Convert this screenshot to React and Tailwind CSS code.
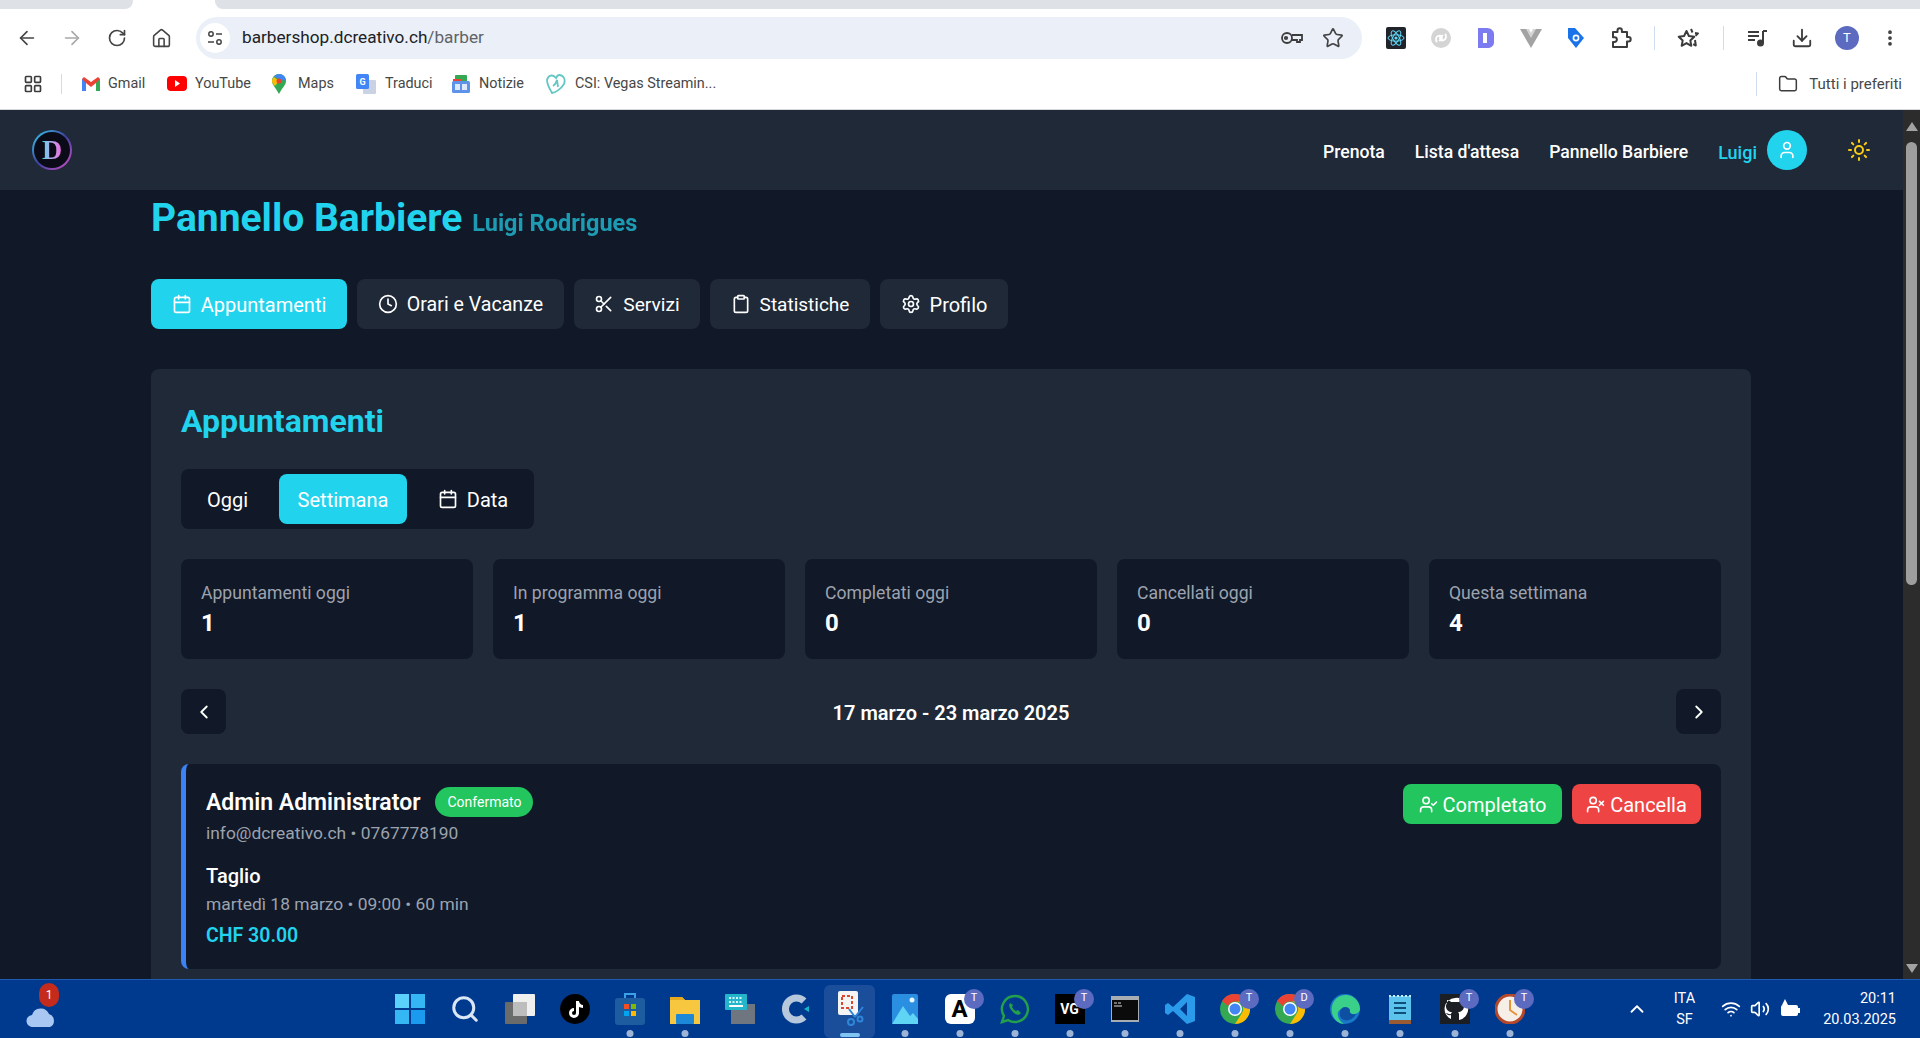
import { ArrowLeft, ArrowRight, RotateCw, Home, Star, Download, MoreVertical, Folder, User, Sun, Calendar, Clock, Scissors, Clipboard, Settings, UserCheck, UserX, ChevronLeft, ChevronRight, ChevronUp, Wifi, Volume2, LayoutGrid, Search } from 'lucide-react'

const FONT = 'font-["Roboto","Liberation_Sans",sans-serif]'

const tabs = [
  { label: 'Appuntamenti', icon: Calendar, active: true, size: 'w-[196px] text-[20px]' },
  { label: 'Orari e Vacanze', icon: Clock, size: 'w-[207px] text-[19.6px]' },
  { label: 'Servizi', icon: Scissors, size: 'w-[126px] text-[19.2px]' },
  { label: 'Statistiche', icon: Clipboard, size: 'w-[160px] text-[19px]' },
  { label: 'Profilo', icon: Settings, size: 'w-[128px] text-[20px]' },
]

const stats = [
  { label: 'Appuntamenti oggi', value: 1 },
  { label: 'In programma oggi', value: 1 },
  { label: 'Completati oggi', value: 0 },
  { label: 'Cancellati oggi', value: 0 },
  { label: 'Questa settimana', value: 4 },
]

function TuneIcon() {
  return (
    <svg width="18" height="18" viewBox="0 0 18 18" fill="none" stroke="#444" strokeWidth="1.5">
      <circle cx="5" cy="5" r="2.2" />
      <path d="M10 5h6M2 13h6" />
      <circle cx="13" cy="13" r="2.2" />
    </svg>
  )
}

function KeyIcon() {
  return (
    <svg width="24" height="22" viewBox="0 0 24 22" fill="none" stroke="#3c3c3c" strokeWidth="1.8">
      <circle cx="7" cy="11" r="5" />
      <circle cx="6" cy="11" r="1.2" />
      <path d="M12 8h10v5h-2v2h-3v-2h-5" />
    </svg>
  )
}

function PuzzleIcon() {
  return (
    <svg width="22" height="22" viewBox="0 0 22 22" fill="none" stroke="#3c3c3c" strokeWidth="2" strokeLinejoin="round">
      <path d="M3 5h4.5V3.5a2.2 2.2 0 014.4 0V5H17v5h1.5a2.2 2.2 0 010 4.4H17V20H3v-5h1.5a2.4 2.4 0 000-4.8H3z" />
    </svg>
  )
}

function StarsIcon() {
  return (
    <svg width="24" height="24" viewBox="0 0 24 24" fill="none" stroke="#3c3c3c" strokeWidth="2" strokeLinejoin="round">
      <path d="M9.5 5l2.4 5 5.4.7-4 3.7 1 5.4-4.8-2.7-4.8 2.7 1-5.4-4-3.7 5.4-.7z" />
      <path d="M14 3l1.5 3.5M18 7l3 .4-2.5 2.4M18 14l.8 5.5-2.6-1.4" />
    </svg>
  )
}

function ReactIcon() {
  return (
    <svg width="20" height="22" viewBox="0 0 20 22">
      <rect width="20" height="22" rx="2" fill="#20232a" />
      <g fill="none" stroke="#61dafb" strokeWidth="1">
        <ellipse cx="10" cy="11" rx="8" ry="3.2" />
        <ellipse cx="10" cy="11" rx="8" ry="3.2" transform="rotate(60 10 11)" />
        <ellipse cx="10" cy="11" rx="8" ry="3.2" transform="rotate(120 10 11)" />
      </g>
      <circle cx="10" cy="11" r="1.6" fill="#61dafb" />
    </svg>
  )
}

function ExtIcons() {
  return (
    <div className="flex items-center">
      <div className="w-[45px] flex justify-center"><ReactIcon /></div>
      <div className="w-[45px] flex justify-center">
        <svg width="22" height="22" viewBox="0 0 22 22">
          <circle cx="11" cy="11" r="10" fill="#d4d4d4" />
          <path d="M7 15c-2-2-1-5 1-6s4 0 4 2-2 3-3 2M15 7c2 2 1 5-1 6s-4 0-4-2 2-3 3-2" fill="none" stroke="#fff" strokeWidth="1.8" />
        </svg>
      </div>
      <div className="w-[45px] flex justify-center">
        <svg width="18" height="24" viewBox="0 0 18 24">
          <path d="M1 2h9c4 0 7 3 7 6v8c0 4-3 6-7 6H1z" fill="#7c7cf0" />
          <rect x="6" y="7" width="4" height="10" fill="#fff" />
        </svg>
      </div>
      <div className="w-[45px] flex justify-center">
        <svg width="22" height="20" viewBox="0 0 22 20">
          <path d="M0 1h8l3 5 3-5h8L11 20z" fill="#a3a3a3" />
          <path d="M6 1h3l2 4 2-4h3l-5 9z" fill="#d4d4d4" />
        </svg>
      </div>
      <div className="w-[45px] flex justify-center">
        <svg width="20" height="22" viewBox="0 0 20 22">
          <path d="M2 1h7l9 10-8 10L2 11z" fill="#1a73e8" />
          <circle cx="10" cy="11" r="3.4" fill="#fff" />
          <circle cx="10" cy="11" r="1.8" fill="#1a73e8" />
        </svg>
      </div>
      <div className="w-[45px] flex justify-center"><PuzzleIcon /></div>
    </div>
  )
}

function BrowserChrome() {
  return (
    <div className="shrink-0 h-[110px] bg-white flex flex-col border-b border-[#d5d7da]">
      <div className="h-[9px] flex">
        <div className="w-[133px] bg-[#dee1e6] rounded-br-lg" />
        <div className="w-[82px]" />
        <div className="flex-1 bg-[#dee1e6] rounded-bl-lg" />
      </div>
      <div className="h-[58px] flex items-center pl-[16px] pr-[18px] text-[#444]">
        <div className="w-[45px]"><ArrowLeft size={22} strokeWidth={1.8} /></div>
        <div className="w-[46px]"><ArrowRight size={22} strokeWidth={1.8} color="#a8a8a8" /></div>
        <div className="w-[44px]"><RotateCw size={20} strokeWidth={2} /></div>
        <div className="w-[45px]"><Home size={21} strokeWidth={1.8} /></div>
        <div className="w-[1166px] h-[42px] bg-[#eaeff8] rounded-full flex items-center pl-[4px] pr-[18px]">
          <div className="w-[30px] h-[30px] bg-white rounded-full flex items-center justify-center mr-[12px]"><TuneIcon /></div>
          <span className="text-[17.2px] text-[#202124]">barbershop.dcreativo.ch<span className="text-[#5f6368]">/barber</span></span>
          <div className="ml-auto flex items-center gap-[18px]">
            <KeyIcon />
            <Star size={22} strokeWidth={1.8} />
          </div>
        </div>
        <div className="ml-[11px]"><ExtIcons /></div>
        <div className="w-px h-[24px] bg-[#cfdcee] ml-[11px]" />
        <div className="w-[68px] flex justify-center"><StarsIcon /></div>
        <div className="w-px h-[24px] bg-[#cfdcee]" />
        <div className="w-[66px] flex justify-center">
          <svg width="22" height="22" viewBox="0 0 22 22" fill="none" stroke="#3c3c3c" strokeWidth="2">
            <path d="M2 5h11M2 9h11M2 13h7" />
            <path d="M17 4v12" />
            <path d="M17 4h4" />
            <circle cx="14.5" cy="16" r="2.5" fill="#3c3c3c" />
          </svg>
        </div>
        <div className="w-[24px] flex justify-center"><Download size={22} strokeWidth={2} color="#3c3c3c" /></div>
        <div className="w-[24px] h-[24px] rounded-full bg-[#5c6bc0] text-white text-[13px] flex items-center justify-center ml-[21px]">T</div>
        <div className="ml-[21px]"><MoreVertical size={20} strokeWidth={2.5} color="#3c3c3c" /></div>
      </div>
      <div className="flex-1 flex items-center pl-[23px] pr-[18px] pb-[8px] text-[14.4px] text-[#474747]">
        <LayoutGrid size={20} strokeWidth={2} color="#3c3c3c" />
        <div className="w-px h-[20px] bg-[#cfdcee] ml-[18px] mr-[20px]" />
        <div className="flex items-center gap-[8px] w-[85px]">
          <svg width="18" height="14" viewBox="0 0 18 14">
            <path d="M0 2v12h4V6l5 4 5-4v8h4V2l-2-2-7 5-7-5z" fill="#ea4335" />
            <path d="M0 2v12h4V6z" fill="#4285f4" />
            <path d="M14 6v8h4V2z" fill="#34a853" />
          </svg>
          <span>Gmail</span>
        </div>
        <div className="flex items-center gap-[8px] w-[105px]">
          <svg width="20" height="15" viewBox="0 0 20 15">
            <rect width="20" height="15" rx="4" fill="#f00" />
            <path d="M8 4l5 3.5L8 11z" fill="#fff" />
          </svg>
          <span>YouTube</span>
        </div>
        <div className="flex items-center gap-[12px] w-[84px]">
          <svg width="14" height="20" viewBox="0 0 14 20">
            <path d="M7 0c4 0 7 3 7 7 0 4-4 7-7 13C4 14 0 11 0 7c0-4 3-7 7-7z" fill="#34a853" />
            <path d="M7 0c4 0 7 3 7 7L2 3c1-2 3-3 5-3z" fill="#4285f4" />
            <path d="M0 7c0-2 1-3 2-4l5 4-4 5C1 10 0 9 0 7z" fill="#fbbc04" />
            <circle cx="7" cy="7" r="2.5" fill="#ea4335" />
          </svg>
          <span>Maps</span>
        </div>
        <div className="flex items-center gap-[9px] w-[96px]">
          <svg width="20" height="20" viewBox="0 0 20 20">
            <rect x="7" y="6" width="13" height="14" rx="1" fill="#c9d3e4" />
            <rect width="13" height="15" rx="1.5" fill="#4285f4" />
            <text x="3.5" y="11" fontSize="9" fill="#fff" fontWeight="700">G</text>
          </svg>
          <span>Traduci</span>
        </div>
        <div className="flex items-center gap-[9px] w-[94px]">
          <svg width="18" height="20" viewBox="0 0 18 20">
            <rect x="3" y="1" width="12" height="8" rx="1" fill="#34a853" />
            <rect x="1" y="5" width="8" height="5" fill="#ea4335" />
            <rect y="7" width="18" height="12" rx="1.5" fill="#5f93ea" />
            <rect x="3" y="10" width="5" height="6" fill="#fff" opacity=".8" />
            <rect x="10" y="10" width="5" height="6" fill="#fff" opacity=".8" />
          </svg>
          <span>Notizie</span>
        </div>
        <div className="flex items-center gap-[9px]">
          <svg width="20" height="20" viewBox="0 0 20 20" fill="none" stroke="#63c7c4" strokeWidth="1.8">
            <path d="M10 4C7 0 2 1 1 6c0 5 3 9 5 13 3 0 9-4 12-9 2-5-1-9-5-9-1 0-2 1-3 3z" />
            <path d="M7 12c2-1 3-3 4-6l1 7" />
          </svg>
          <span>CSI: Vegas Streamin...</span>
        </div>
        <div className="ml-auto w-px h-[24px] bg-[#cfdcee] mr-[21px]" />
        <Folder size={20} strokeWidth={1.8} color="#3c3c3c" className="mr-[11px]" />
        <span className="text-[15px]">Tutti i preferiti</span>
      </div>
    </div>
  )
}

function Navbar() {
  return (
    <nav className="shrink-0 h-[80px] bg-[#1f2937] flex items-center px-8">
      <div className="w-[40px] h-[40px] rounded-full bg-gradient-to-br from-[#22d3ee] via-[#3b3f9f] to-[#d946c8] p-[2px]">
        <div className="w-full h-full rounded-full bg-[#0b0b18] flex items-center justify-center">
          <span className='text-[28px] leading-none font-bold font-["Liberation_Serif",serif] bg-gradient-to-r from-[#22d3ee] to-[#f062e0] bg-clip-text text-transparent'>D</span>
        </div>
      </div>
      <div className="ml-auto flex items-center text-[17.6px] font-medium text-white">
        <a className="mr-[30px] pt-[4px]">Prenota</a>
        <a className="mr-[30px] pt-[4px]">Lista d'attesa</a>
        <a className="mr-[30px] pt-[4px]">Pannello Barbiere</a>
        <span className="text-[#22d3ee] text-[18px] font-medium mr-[10px] pt-[4px]">Luigi</span>
        <div className="w-[40px] h-[40px] rounded-full bg-[#22d3ee] flex items-center justify-center"><User size={20} color="#fff" /></div>
        <Sun size={24} color="#facc15" className="ml-[40px]" />
      </div>
    </nav>
  )
}

function Dashboard() {
  return (
    <main className="w-[1600px] ml-[151px] pt-[8px]">
      <div className="flex items-baseline h-[40px] mb-[41px]">
        <h1 className="text-[39px] leading-[40px] font-bold text-[#22d3ee]">Pannello Barbiere</h1>
        <span className="text-[23.5px] font-bold text-[#22d3ee] opacity-70 ml-[10px]">Luigi Rodrigues</span>
      </div>

      <div className="flex gap-[10px] mb-[40px]">
        {tabs.map(t => (
          <button key={t.label} className={`h-[50px] rounded-lg flex items-center justify-center gap-[9px] text-white ${t.size} ${t.active ? 'bg-[#22d3ee]' : 'bg-[#1f2937]'}`}>
            <t.icon size={20} />
            <span className="pt-[2px]">{t.label}</span>
          </button>
        ))}
      </div>

      <section className="bg-[#1f2937] rounded-lg p-[30px]">
        <h2 className="text-[32px] leading-[44px] font-bold text-[#22d3ee] mb-[26px]">Appuntamenti</h2>

        <div className="inline-flex items-center h-[60px] p-[5px] bg-[#111827] rounded-lg mb-[30px] text-[20px] text-white align-top">
          <button className="h-[50px] w-[83px] pt-[2px] rounded-lg mr-[10px]">Oggi</button>
          <button className="h-[50px] w-[128px] pt-[2px] rounded-lg bg-[#22d3ee]">Settimana</button>
          <button className="h-[50px] w-[112px] ml-[10px] rounded-lg flex items-center justify-center gap-[9px]"><Calendar size={20} /><span className="pt-[2px]">Data</span></button>
        </div>

        <div className="grid grid-cols-5 gap-[20px] mb-[30px]">
          {stats.map(s => (
            <div key={s.label} className="h-[100px] bg-[#111827] rounded-lg px-[20px] pt-[21px]">
              <p className="text-[17.6px] leading-[26px] text-[#9ca3af]">{s.label}</p>
              <p className="text-[24px] leading-[32px] font-bold text-white mt-[1px]">{s.value}</p>
            </div>
          ))}
        </div>

        <div className="flex items-center justify-between mb-[30px]">
          <button className="w-[45px] h-[45px] rounded-lg bg-[#111827] flex items-center justify-center text-white"><ChevronLeft size={22} /></button>
          <span className="text-[20px] font-semibold text-white pt-[2px]">17 marzo - 23 marzo 2025</span>
          <button className="w-[45px] h-[45px] rounded-lg bg-[#111827] flex items-center justify-center text-white"><ChevronRight size={22} /></button>
        </div>

        <div className="h-[205px] bg-[#111827] rounded-lg border-l-[5px] border-[#3b82f6] p-[20px] flex items-start justify-between">
          <div>
            <div className="flex items-center h-[36px]">
              <h3 className="text-[23px] font-semibold text-white pt-[2px]">Admin Administrator</h3>
              <span className="ml-[15px] h-[30px] px-[12px] rounded-full bg-[#22c55e] text-white text-[14px] flex items-center">Confermato</span>
            </div>
            <p className="text-[17.4px] leading-[24px] text-[#9ca3af] mt-[1px]">info@dcreativo.ch • 0767778190</p>
            <p className="text-[20px] leading-[26px] font-medium text-white mt-[18px]">Taglio</p>
            <p className="text-[17.4px] leading-[24px] text-[#9ca3af] mt-[3px]">martedì 18 marzo • 09:00 • 60 min</p>
            <p className="text-[19.5px] leading-[28px] font-semibold text-[#22d3ee] mt-[6px]">CHF 30.00</p>
          </div>
          <div className="flex gap-[10px]">
            <button className="h-[40px] w-[159px] rounded-lg bg-[#22c55e] text-white text-[20px] flex items-center justify-center gap-[5px]"><UserCheck size={19} /><span className="pt-[2px]">Completato</span></button>
            <button className="h-[40px] w-[129px] rounded-lg bg-[#ef4444] text-white text-[20px] flex items-center justify-center gap-[5px]"><UserX size={19} /><span className="pt-[2px]">Cancella</span></button>
          </div>
        </div>
      </section>
    </main>
  )
}

function Scrollbar() {
  return (
    <div className="w-[17px] shrink-0 bg-[#2c2c2c] flex flex-col items-center">
      <div className="h-[32px] flex items-center"><div className="w-0 h-0 border-x-[6px] border-x-transparent border-b-[9px] border-b-[#a3a3a3]" /></div>
      <div className="w-[11px] h-[443px] rounded-full bg-[#9e9e9e]" />
      <div className="mt-auto h-[22px] flex items-center"><div className="w-0 h-0 border-x-[6px] border-x-transparent border-t-[9px] border-t-[#a3a3a3]" /></div>
    </div>
  )
}

function TaskIcon({ children, dot, badge, active }) {
  return (
    <div className="relative w-[55px] h-[59px] flex items-center justify-center">
      {active && <div className="absolute inset-x-[2px] top-[5px] bottom-[1px] rounded-md bg-white/10" />}
      <div className="relative">{children}</div>
      {dot && <div className="absolute bottom-[2px] left-1/2 -translate-x-1/2 w-[7px] h-[7px] rounded-full bg-[#9db4d6]" />}
      {active && <div className="absolute bottom-[2px] left-1/2 -translate-x-1/2 w-[20px] h-[4px] rounded-full bg-[#7fc4f2]" />}
      {badge && <div className="absolute top-[9px] right-[3px] w-[20px] h-[20px] rounded-full bg-[#5c6bc0] text-[11px] text-white flex items-center justify-center">{badge}</div>}
    </div>
  )
}

function Chromium({ color = '#4285f4' }) {
  return (
    <svg width="30" height="30" viewBox="0 0 30 30">
      <circle cx="15" cy="15" r="15" fill="#34a853" />
      <path d="M15 0a15 15 0 0113 7.5H15a7.5 7.5 0 00-7 4.5L2 7a15 15 0 0113-7z" fill="#ea4335" />
      <path d="M28 7.5A15 15 0 0115 30l7-11a7.5 7.5 0 00-7-11.5z" fill="#fbbc04" />
      <circle cx="15" cy="15" r="7" fill="#fff" />
      <circle cx="15" cy="15" r="5.5" fill={color} />
    </svg>
  )
}

function Taskbar() {
  return (
    <footer className="shrink-0 h-[59px] bg-[#003a8f] border-t border-[#1f5bb0] flex items-center text-white">
      <div className="w-[382px] pl-[26px] flex items-center">
        <div className="relative">
          <svg width="30" height="22" viewBox="0 0 30 22" className="mt-[14px]">
            <path d="M7 22a6 6 0 01-1-12 9 9 0 0117-1 7 7 0 011 13z" fill="#a9c7f3" />
          </svg>
          <div className="absolute -top-[8px] left-[13px] w-[20px] h-[24px] rounded-full bg-[#c42b1c] text-[12px] flex items-center justify-center">1</div>
        </div>
      </div>
      <div className="flex items-center">
        <TaskIcon>
          <svg width="30" height="30" viewBox="0 0 30 30">
            <rect width="14" height="14" fill="#5bd0fb" />
            <rect x="16" width="14" height="14" fill="#35b6f5" />
            <rect y="16" width="14" height="14" fill="#35b6f5" />
            <rect x="16" y="16" width="14" height="14" fill="#1a9bf0" />
          </svg>
        </TaskIcon>
        <TaskIcon><Search size={30} color="#dbe7f6" strokeWidth={2.4} /></TaskIcon>
        <TaskIcon>
          <svg width="30" height="30" viewBox="0 0 30 30">
            <rect y="8" width="22" height="22" rx="1" fill="#6b6b6b" />
            <rect x="8" width="22" height="22" rx="1" fill="#efefef" />
            <rect x="8" y="8" width="14" height="14" fill="#bdbdbd" />
          </svg>
        </TaskIcon>
        <TaskIcon>
          <svg width="30" height="30" viewBox="0 0 30 30">
            <circle cx="15" cy="15" r="15" fill="#000" />
            <path d="M16 7h3c0 2 2 4 4 4v3c-2 0-3-1-4-1v6a5 5 0 11-5-5v3a2 2 0 102 2z" fill="#fff" />
          </svg>
        </TaskIcon>
        <TaskIcon dot>
          <svg width="30" height="32" viewBox="0 0 30 32">
            <path d="M10 5V1h10v4" fill="none" stroke="#3aa0e8" strokeWidth="2" />
            <rect y="5" width="30" height="27" rx="3" fill="#1d5c9e" />
            <rect x="9" y="11" width="5" height="5" fill="#f25022" />
            <rect x="16" y="11" width="5" height="5" fill="#7fba00" />
            <rect x="9" y="18" width="5" height="5" fill="#00a4ef" />
            <rect x="16" y="18" width="5" height="5" fill="#ffb900" />
          </svg>
        </TaskIcon>
        <TaskIcon dot>
          <svg width="30" height="30" viewBox="0 0 30 30">
            <path d="M0 3h12l3 3h15v24H0z" fill="#f7c83f" />
            <path d="M0 3h12l3 3H0z" fill="#e6a91e" />
            <rect x="6" y="20" width="18" height="10" rx="1" fill="#1e88d8" />
          </svg>
        </TaskIcon>
        <TaskIcon>
          <svg width="30" height="30" viewBox="0 0 30 30">
            <rect x="6" y="10" width="24" height="20" fill="#6f7680" />
            <rect width="22" height="16" rx="1" fill="#23b5c9" />
            <path d="M4 4h14M4 8h14" stroke="#d5f5fa" strokeWidth="2" strokeDasharray="2 1.5" />
            <rect x="4" y="11" width="14" height="2" fill="#fff" />
          </svg>
        </TaskIcon>
        <TaskIcon>
          <svg width="30" height="30" viewBox="0 0 30 30">
            <path d="M24 7a11 11 0 100 16" fill="none" stroke="#b7c8dc" strokeWidth="7" />
            <path d="M29 12l-5 3 5 3z" fill="#17b5c9" />
          </svg>
        </TaskIcon>
        <TaskIcon active>
          <svg width="30" height="36" viewBox="0 0 30 36">
            <rect x="3" y="0" width="20" height="24" rx="2" fill="#f4f4f4" />
            <rect x="7" y="5" width="10" height="12" fill="none" stroke="#d9472f" strokeWidth="2" strokeDasharray="3 2" />
            <path d="M14 18l6 8M28 16l-8 10" stroke="#2f86d9" strokeWidth="2" />
            <circle cx="16" cy="31" r="3" fill="none" stroke="#2f86d9" strokeWidth="2" />
            <circle cx="25" cy="28" r="2.5" fill="none" stroke="#2f86d9" strokeWidth="2" />
          </svg>
        </TaskIcon>
        <TaskIcon dot>
          <svg width="26" height="30" viewBox="0 0 26 30">
            <rect width="26" height="30" rx="2" fill="#2a8fe0" />
            <path d="M0 30l11-18 7 10 3-3 5 6v5z" fill="#5fd4f5" />
            <circle cx="20" cy="6" r="2.5" fill="#e8f6ff" />
          </svg>
        </TaskIcon>
        <TaskIcon dot badge="T">
          <div className="w-[30px] h-[30px] rounded-md bg-white text-black text-[24px] font-bold leading-[30px] text-center">A</div>
        </TaskIcon>
        <TaskIcon dot>
          <svg width="30" height="30" viewBox="0 0 30 30">
            <path d="M15 2a13 13 0 00-11 20L2 28l6-2a13 13 0 107-24z" fill="none" stroke="#25a04a" strokeWidth="2.4" />
            <path d="M10 9c-2 3 0 6 3 9s6 4 8 1l-3-3-2 1c-2-1-3-2-4-4l1-2z" fill="#25a04a" />
          </svg>
        </TaskIcon>
        <TaskIcon dot badge="T">
          <div className="w-[30px] h-[30px] bg-black text-white text-[14px] font-bold leading-[30px] text-center">VG</div>
        </TaskIcon>
        <TaskIcon dot>
          <svg width="28" height="26" viewBox="0 0 28 26">
            <rect width="28" height="26" fill="#a8adb3" />
            <rect x="1" y="4" width="26" height="20" fill="#0b0b0b" />
            <path d="M3 7h3M7 7h3M3 10h8" stroke="#ddd" strokeWidth="1" />
          </svg>
        </TaskIcon>
        <TaskIcon dot>
          <svg width="30" height="30" viewBox="0 0 30 30">
            <path d="M22 0l8 3v24l-8 3L8 17l-5 4-3-2v-8l3-2 5 4zM22 8l-7 7 7 7z" fill="#2a9bea" />
          </svg>
        </TaskIcon>
        <TaskIcon dot badge="T"><Chromium /></TaskIcon>
        <TaskIcon dot badge="D"><Chromium /></TaskIcon>
        <TaskIcon dot>
          <svg width="30" height="30" viewBox="0 0 30 30">
            <circle cx="15" cy="15" r="15" fill="#1a78c9" />
            <path d="M2 12C4 3 14-2 23 3c5 3 7 8 7 12 0 3-3 5-7 5-3 0-5-2-4-4-3-3-9-2-11 2-1 4 1 9 6 12C7 30 0 22 2 12z" fill="#3bd08a" />
            <path d="M12 14c3-2 7-1 8 2-1 3 2 5 6 4-3 6-10 8-14 5-3-3-3-8 0-11z" fill="#0c4fa3" />
          </svg>
        </TaskIcon>
        <TaskIcon dot>
          <svg width="22" height="30" viewBox="0 0 22 30">
            <rect y="2" width="22" height="28" fill="#5cc4ec" />
            <rect y="26" width="22" height="4" fill="#9a5a34" />
            <path d="M1 1v2M5 1v2M9 1v2M13 1v2M17 1v2M21 1v2" stroke="#cbeaf7" strokeWidth="2" />
            <path d="M5 9h12M5 14h12M5 19h12" stroke="#0d4f78" strokeWidth="2" />
          </svg>
        </TaskIcon>
        <TaskIcon dot badge="T">
          <svg width="30" height="30" viewBox="0 0 30 30">
            <rect width="30" height="30" fill="#1b1f23" />
            <path d="M15 4a11 11 0 00-4 21v-4c-3 1-4-1-5-2 2 0 3 2 5 1 0-1 1-2 1-2-3 0-6-2-6-6 0-1 1-3 1-3s0-2 0-3c2 0 3 1 4 2h8c1-1 2-2 4-2 0 1 0 3 0 3s1 2 1 3c0 4-3 6-6 6 1 1 1 2 1 3v5a11 11 0 00-4-22z" fill="#fff" />
          </svg>
        </TaskIcon>
        <TaskIcon dot badge="T">
          <svg width="30" height="30" viewBox="0 0 30 30">
            <circle cx="15" cy="15" r="14" fill="#f5efe8" stroke="#b5482a" strokeWidth="3" />
            <path d="M15 6v10l7 5" fill="none" stroke="#e89438" strokeWidth="2" />
          </svg>
        </TaskIcon>
      </div>
      <div className="ml-auto flex items-center text-[14.5px] pr-[24px]">
        <ChevronUp size={22} className="mr-[26px]" />
        <div className="flex flex-col items-center leading-[21px] mr-[26px]"><span>ITA</span><span>SF</span></div>
        <Wifi size={20} className="mr-[9px]" />
        <Volume2 size={20} className="mr-[9px]" />
        <svg width="22" height="20" viewBox="0 0 22 20" className="mr-[22px]">
          <rect x="2" y="6" width="17" height="11" rx="2" fill="#fff" />
          <rect x="19" y="9" width="2" height="5" fill="#fff" />
          <path d="M6 0l3 6H3z" fill="#fff" />
        </svg>
        <div className="flex flex-col items-end leading-[21px]"><span>20:11</span><span>20.03.2025</span></div>
      </div>
    </footer>
  )
}

export default function App() {
  return (
    <div className={`h-[1038px] w-[1920px] overflow-hidden flex flex-col ${FONT}`}>
      <BrowserChrome />
      <div className="flex-1 min-h-0 flex">
        <div className="flex-1 min-w-0 bg-[#111827] flex flex-col">
          <Navbar />
          <div className="flex-1 min-h-0 overflow-hidden">
            <Dashboard />
          </div>
        </div>
        <Scrollbar />
      </div>
      <Taskbar />
    </div>
  )
}
